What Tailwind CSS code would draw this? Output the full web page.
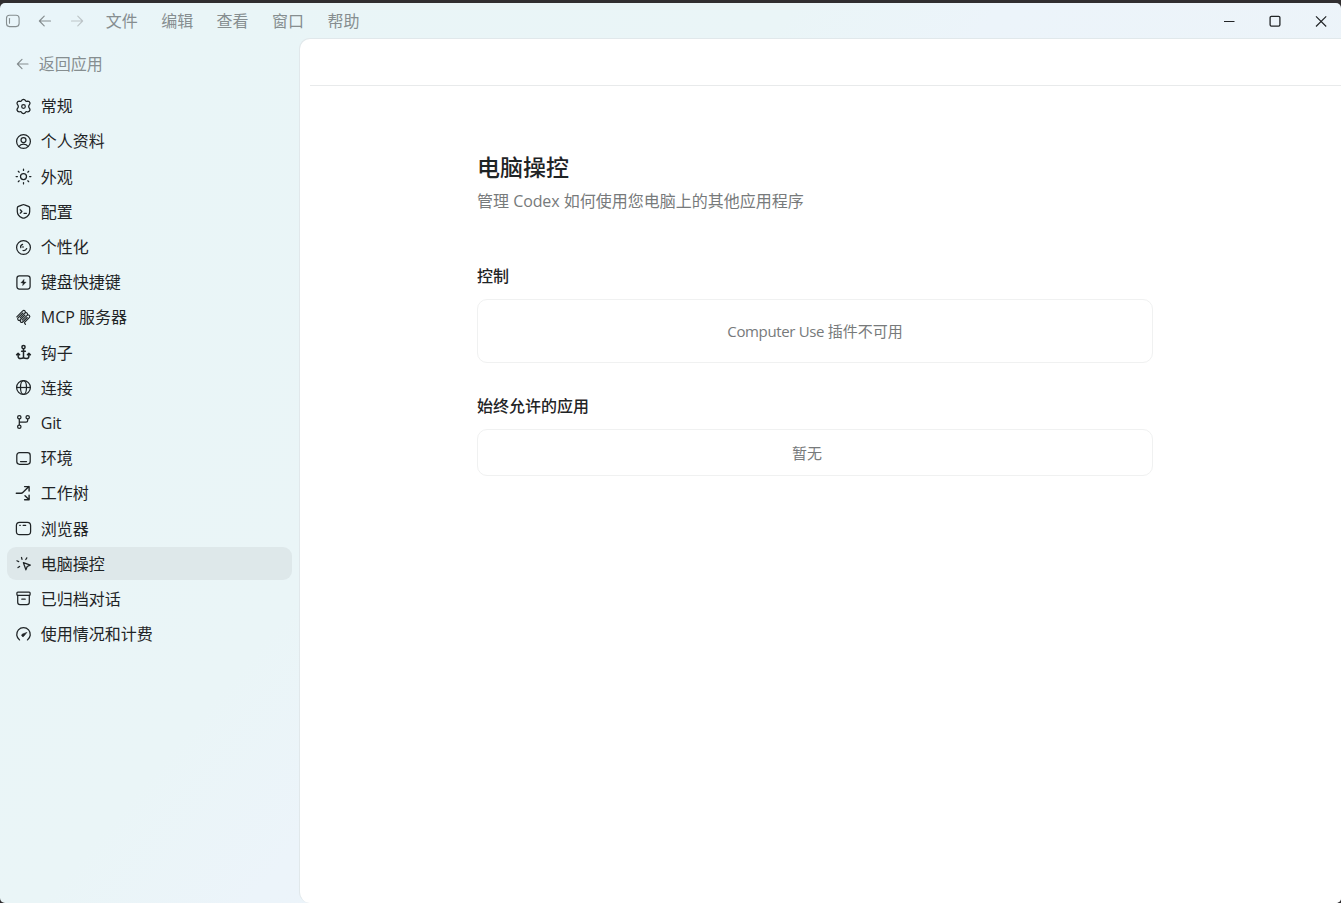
<!DOCTYPE html>
<html lang="zh-CN">
<head>
<meta charset="utf-8">
<title>电脑操控</title>
<script src="https://cdn.jsdelivr.net/npm/@tailwindcss/browser@4"></script>
</head>
<body class="h-[903px] w-[1341px] overflow-hidden bg-[#302e30] pt-[3px] font-['Open_Sans','Noto_Sans_CJK_SC',sans-serif] text-[16px] text-[#1f2426]">
<div class="flex h-[900px] flex-col overflow-hidden rounded-[5px] bg-[linear-gradient(130deg,#e9f5fa_0%,#e9f5f7_10%,#eaf5f7_38%,#ecf4fa_48%,#edf3f7_100%)]">
  <header class="flex h-[35px] shrink-0 items-center justify-between text-[#868e90]">
    <div class="flex items-center pl-[5px]">
      <svg class="size-4" viewBox="0 0 16 16" fill="none" stroke="currentColor" stroke-width="1.1" stroke-linecap="round"><rect x="1.5" y="2.2" width="12.6" height="11.4" rx="3"/><path d="M4.5 5.5v4.8"/></svg>
      <svg class="ml-4 size-4" viewBox="0 0 16 16" fill="none" stroke="currentColor" stroke-width="1.2" stroke-linecap="round" stroke-linejoin="round"><path d="M13.5 8H2.5M7.2 3.2 2.4 8l4.8 4.8"/></svg>
      <svg class="ml-4 size-4 text-[#bdc5c8]" viewBox="0 0 16 16" fill="none" stroke="currentColor" stroke-width="1.2" stroke-linecap="round" stroke-linejoin="round"><path d="M2.5 8h11M8.8 3.2 13.6 8l-4.8 4.8"/></svg>
      <nav class="ml-[20.8px] flex gap-[23.4px] leading-[20px]"><span>文件</span><span>编辑</span><span>查看</span><span>窗口</span><span>帮助</span></nav>
    </div>
    <div class="flex items-center gap-[30px] pr-3 text-[#222527]">
      <svg class="size-4" viewBox="0 0 16 16" fill="none" stroke="currentColor" stroke-width="1.2"><path d="M3 8.5h10.5"/></svg>
      <svg class="size-4" viewBox="0 0 16 16" fill="none" stroke="currentColor" stroke-width="1.3"><rect x="3.1" y="3.3" width="9.8" height="9.8" rx="1.3"/></svg>
      <svg class="size-4" viewBox="0 0 16 16" fill="none" stroke="currentColor" stroke-width="1.2"><path d="m3 3.3 10.2 10.2M13.2 3.3 3 13.5"/></svg>
    </div>
  </header>
  <div class="flex min-h-0 flex-1">
    <aside class="flex w-[299px] shrink-0 flex-col pl-[7px] pr-[7px] pt-[15px]">
      <div class="flex h-[22px] items-center gap-[7.7px] pl-2 text-[#868e90]">
        <svg class="size-4" viewBox="0 0 16 16" fill="none" stroke="currentColor" stroke-width="1.2" stroke-linecap="round" stroke-linejoin="round"><path d="M13 8H2.5M7 3.4 2.4 8 7 12.6"/></svg><span>返回应用</span>
      </div>
      <nav class="mt-[14.7px] flex flex-col gap-[2px] [&>div]:flex [&>div]:h-[33.2px] [&>div]:items-center [&>div]:gap-[8.8px] [&>div]:rounded-[9px] [&>div]:pl-2 [&_svg]:size-[17px] [&_svg]:fill-none [&_svg]:stroke-current [&_svg]:stroke-[1.25]">
        <div><svg viewBox="0 0 17 17" stroke-linejoin="round"><path d="M7 2Q8.500.7 10 2L10.600 2.900Q11 3.500 11.700 3.300L12.800 3.200Q14.400 3.300 14.900 4.800Q15.200 5.700 14.500 6.500L14 7.300Q13.400 8.500 14 9.700L14.500 10.500Q15.200 11.300 14.900 12.200Q14.400 13.700 12.800 13.800L11.700 13.700Q11 13.500 10.600 14.100L10 15Q8.500 16.300 7 15L6.400 14.100Q6 13.500 5.300 13.700L4.200 13.800Q2.600 13.700 2.100 12.200Q1.800 11.300 2.500 10.500L3 9.700Q3.600 8.500 3 7.300L2.500 6.500Q1.800 5.700 2.100 4.800Q2.600 3.300 4.200 3.200L5.300 3.300Q6 3.500 6.400 2.900Z"/><circle cx="8.500" cy="8.500" r="1.800"/></svg><span>常规</span></div>
        <div><svg viewBox="0 0 17 17"><circle cx="8.500" cy="8.500" r="6.900"/><circle cx="8.500" cy="7" r="2.500"/><path d="M4 13.500c1-1.800 2.600-2.300 4.500-2.300s3.500.5 4.500 2.300"/></svg><span>个人资料</span></div>
        <div><svg viewBox="0 0 17 17" stroke-linecap="round"><circle cx="8.500" cy="8.500" r="3"/><path d="M8.500 1.100v1.300M8.500 14.600v1.300M1.100 8.500h1.300M14.600 8.500h1.300M3.300 3.300l.9.900M12.800 12.800l.9.900M3.300 13.700l.9-.9M12.800 4.200l.9-.9"/></svg><span>外观</span></div>
        <div><svg viewBox="0 0 17 17" stroke-linecap="round" stroke-linejoin="round"><path d="M7.500 1.800c.7-.3 1.300-.3 2 0l4 1.600c.8.300 1.200.9 1.200 1.700v3.400c0 3-2 5.100-4.900 6.400-.9.400-1.700.4-2.600 0-2.900-1.300-4.900-3.400-4.900-6.400V5.100c0-.8.400-1.400 1.200-1.700z"/><path d="m5.300 6.800 1.600 1.700-1.600 1.700M9 10.300h2.400"/></svg><span>配置</span></div>
        <div><svg viewBox="0 0 17 17" stroke-linecap="round"><circle cx="8.500" cy="8.500" r="6.900"/><path d="M7.600 5.300C6 5.900 5.300 7.300 5.800 8.700M8 7.500v.8M8.100 11.500c1.600.3 3-.5 3.600-1.900"/></svg><span>个性化</span></div>
        <div><svg viewBox="0 0 17 17" stroke-linejoin="round"><rect x="1.900" y="1.900" width="13.200" height="13.200" rx="2.500"/><path class="fill-current stroke-[.3]" d="M9.100 5.200 5.800 8.900h2.100l-.3 2.900L11.200 8H9z"/></svg><span>键盘快捷键</span></div>
        <div><svg class="!stroke-[1.15]" viewBox="0 0 17 17" stroke-linecap="round" stroke-linejoin="round"><path d="m1.800 7.800 5.900-5.900c.7-.7 1.600-.7 2.200 0s.6 1.600 0 2.200L5.200 8.800M9.900 4.100c.7-.6 1.600-.6 2.200 0s.6 1.600 0 2.200l-4.900 4.900M12.100 6.400c.7-.6 1.600-.6 2.200 0s.6 1.600 0 2.200l-4.500 4.500c-.5.500-.5.900 0 1.400l.7.800M7.900 4 3.200 8.700c-.7.700-.7 1.600 0 2.300M10 6.200l-4.500 4.500M12.200 8.500 7.700 13c-.6.600-1.400.6-2 0s-.6-1.500-.2-2.300c-.7.700-1.600.9-2.300.3"/></svg><span>MCP 服务器</span></div>
        <div><svg class="!stroke-[1.5]" viewBox="0 0 17 17" stroke-linecap="round" stroke-linejoin="round"><circle cx="8.500" cy="3.100" r="1.600"/><path d="M8.500 4.800v8.400M6.600 7.200h3.800M1.600 10.800l1.500-1.400 1.500 1.400M12.400 10.800l1.500-1.400 1.500 1.400M3.100 9.800v2.100c0 1.700.9 2.600 2.500 2.600 1.500 0 2.900-.2 2.900-1.500 0 1.300 1.400 1.500 2.900 1.500 1.600 0 2.500-.9 2.500-2.600V9.800"/></svg><span>钩子</span></div>
        <div><svg viewBox="0 0 17 17"><circle cx="8.500" cy="8.500" r="6.900"/><ellipse cx="8.500" cy="8.500" rx="3" ry="6.900"/><path d="M1.600 8.500h13.800"/></svg><span>连接</span></div>
        <div><svg viewBox="0 0 17 17"><circle cx="4.300" cy="3.200" r="1.700"/><circle cx="12.700" cy="3.200" r="1.700"/><circle cx="4.300" cy="12.700" r="1.700"/><path d="M4.300 4.900v6.100M12.700 4.900v1.500c0 1.100-.6 1.700-1.700 1.700H4.300"/></svg><span class="pt-px tracking-[-.3px]">Git</span></div>
        <div><svg viewBox="0 0 17 17" stroke-linecap="round"><rect x="1.800" y="2.700" width="13.400" height="11.600" rx="2.700"/><path d="M5.500 11.500h6"/></svg><span>环境</span></div>
        <div><svg class="!stroke-[1.4]" viewBox="0 0 17 17" stroke-linecap="round" stroke-linejoin="round"><path d="M1.300 8.300h4.900c.7 0 1.100-.2 1.600-.7l6.100-6M9.600 1.600h4.500v4.500M10 10.700l3.900 3.900M14.100 10.300v4.500H9.600"/></svg><span>工作树</span></div>
        <div><svg viewBox="0 0 17 17" stroke-linecap="round"><rect x="1.400" y="2.300" width="14.200" height="12.400" rx="3.200"/><path d="M4.700 5.300h.6M8.100 5.300h2.600"/></svg><span>浏览器</span></div>
        <div class="bg-[#dee8ea]"><svg viewBox="0 0 17 17" stroke-linecap="round" stroke-linejoin="round"><path d="m8.400 7.700 6.900 2.400-3.100 1.400-1.300 3.300zM6.500 2.500l.5 1.900M11.800 2.900l-1 1.600M1.900 5.800l1.800.8M3 12.600l1.600-1.200"/></svg><span>电脑操控</span></div>
        <div><svg viewBox="0 0 17 17" stroke-linecap="round" stroke-linejoin="round"><rect x="1.900" y="2" width="13.200" height="3.400" rx="1"/><path d="M2.700 5.400v6.900c0 1.500.8 2.300 2.300 2.300h7c1.500 0 2.300-.8 2.300-2.300V5.400M6.800 9.200h3.400"/></svg><span>已归档对话</span></div>
        <div><svg viewBox="0 0 17 17" stroke-linecap="round" stroke-linejoin="round"><path d="M4.600 13.900A6.800 6.800 0 1 1 12.400 13.900"/><path class="fill-current stroke-[.6]" d="m11.600 6.500-4.100 1.600a1.300 1.300 0 1 0 1.600 1.900z"/></svg><span>使用情况和计费</span></div>
      </nav>
    </aside>
    <main class="flex min-w-0 flex-1 flex-col rounded-l-[11px] border-l border-t border-[#e1e8eb] bg-white">
      <div class="ml-[10px] h-[47px] shrink-0 border-b border-[#e8eaeb]"></div>
      <div class="ml-[177px] w-[676px] pt-[65px]">
        <h1 class="text-[23px] font-medium leading-[32px]">电脑操控</h1>
        <p class="mt-[6px] leading-[24px] text-[#777a7b]">管理 <span class="tracking-[-.1px]">Codex</span> 如何使用您电脑上的其他应用程序</p>
        <h2 class="mt-[51px] font-medium leading-[24px]">控制</h2>
        <section class="mt-[11px] flex h-[64px] items-center justify-center rounded-[10px] border border-[#f0f1f1] text-[15px] text-[#777a7b]"><p><span class="tracking-[-.35px]">Computer Use </span>插件不可用</p></section>
        <h2 class="mt-[31px] font-medium leading-[24px]">始终允许的应用</h2>
        <section class="mt-[11px] flex h-[47px] items-center justify-center rounded-[10px] border border-[#f0f1f1] pr-4 pt-px text-[15px] text-[#777a7b]">暂无</section>
      </div>
    </main>
  </div>
</div>
</body>
</html>
